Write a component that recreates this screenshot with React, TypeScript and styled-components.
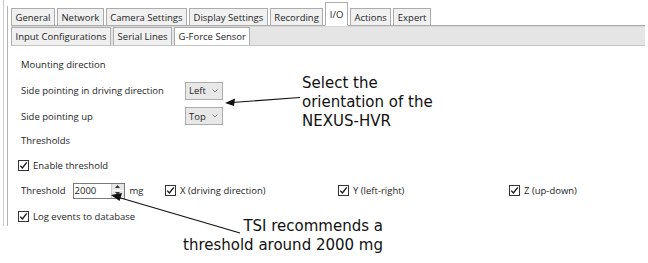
import * as React from "react";
import styled, { createGlobalStyle } from "styled-components";

const GlobalStyle = createGlobalStyle`
  html, body { margin: 0; padding: 0; background: #ffffff; }
  body { width: 648px; height: 263px; overflow: hidden; }
`;

const UI_FONT = `"Open Sans", "Noto Sans", sans-serif`;
const NOTE_FONT = `"DejaVu Sans", Verdana, sans-serif`;

const Page = styled.div`
  position: relative;
  width: 648px;
  height: 263px;
  background: #ffffff;
  font-family: ${UI_FONT};
  font-size: 9.5px;
  color: #1e1e1e;
`;

const OuterFrame = styled.div`
  margin-left: 3px;
  padding-top: 6px;
  width: 642px;
  height: 226px;
  border-left: 1px solid #c8c8c8;
  box-sizing: border-box;
`;

const InnerFrame = styled.div`
  margin-left: 3px;
  height: 100%;
  border-left: 1px solid #b4b4b4;
  padding-left: 3px;
`;

const TabRow = styled.div`
  display: flex;
  align-items: flex-end;
  height: 19px;
  border-bottom: 1px solid #acacac;
`;

const Tab = styled.div<{ $active?: boolean }>`
  height: ${(p) => (p.$active ? 22 : 16)}px;
  margin-bottom: ${(p) => (p.$active ? -1 : 0)}px;
  padding: 0 3.5px;
  margin-right: 2px;
  display: flex;
  align-items: center;
  border: 1px solid #acacac;
  border-bottom: ${(p) => (p.$active ? "1px solid #ffffff" : "none")};
  background: ${(p) => (p.$active ? "#ffffff" : "#f0f0f0")};
  white-space: nowrap;
  z-index: ${(p) => (p.$active ? 1 : 0)};
`;

const SubPanel = styled.div``;

const SubTabRow = styled.div`
  display: flex;
  align-items: stretch;
  height: 18px;
  background: #e5e5e5;
  border-top: 1px solid #d8d8d8;
  border-bottom: 1px solid #c4c4c4;
`;

const SubTab = styled.div<{ $active?: boolean }>`
  padding: 0 3.5px;
  margin-right: 2px;
  display: flex;
  align-items: center;
  border: 1px solid #acacac;
  border-bottom: none;
  background: ${(p) => (p.$active ? "#ffffff" : "#f0f0f0")};
  white-space: nowrap;
`;

const Content = styled.div`
  padding: 5px 0 0 10px;
  display: flex;
  flex-direction: column;
`;

const Row = styled.div<{ $h: number }>`
  height: ${(p) => p.$h}px;
  display: flex;
  align-items: center;
`;

const Label = styled.span<{ $w?: number }>`
  width: ${(p) => (p.$w ? `${p.$w}px` : "auto")};
  white-space: nowrap;
`;

const Combo = styled.div`
  width: 38px;
  height: 18px;
  box-sizing: border-box;
  border: 1px solid #acacac;
  background: #e8e8e8;
  display: flex;
  align-items: center;
  justify-content: space-between;
  padding: 0 4px 0 3px;
`;

const Chevron = styled.svg`
  width: 6px;
  height: 4px;
`;

const CheckRow = styled.label`
  display: flex;
  align-items: center;
  gap: 4px;
  margin-left: -3px;
  white-space: nowrap;
`;

const Box = styled.span`
  width: 11px;
  height: 11px;
  box-sizing: border-box;
  border: 1px solid #333333;
  background: #ffffff;
  display: flex;
  align-items: center;
  justify-content: center;
`;

const ThresholdGrid = styled.div`
  display: grid;
  grid-template-columns: 147px 173px 171px auto;
  align-items: center;
  width: 100%;
`;

const ThresholdCell = styled.div`
  display: flex;
  align-items: center;
`;

const Spin = styled.div`
  margin-left: 7px;
  width: 52px;
  height: 16px;
  box-sizing: border-box;
  border: 1px solid #7a7a7a;
  display: flex;
  align-items: center;
  background: #ffffff;
`;

const SpinValue = styled.span`
  flex: 1;
  padding-left: 1px;
`;

const SpinButtons = styled.div`
  width: 12px;
  height: 100%;
  display: flex;
  flex-direction: column;
  border-left: 1px solid #d0d0d0;
`;

const SpinButton = styled.div`
  flex: 1;
  background: #e6e6e6;
  display: flex;
  align-items: center;
  justify-content: center;
  border-bottom: 1px solid #ffffff;
`;

const Unit = styled.span`
  margin-left: 5px;
`;

const Note = styled.div<{ $align: "left" | "right" }>`
  position: absolute;
  font-family: ${NOTE_FONT};
  font-size: 15px;
  line-height: 19px;
  color: #111111;
  text-align: ${(p) => p.$align};
  white-space: nowrap;
`;

const NoteTop = styled(Note)`
  left: 302px;
  top: 74px;
`;

const NoteBottom = styled(Note)`
  right: 265px;
  top: 217px;
`;

const Arrows = styled.svg`
  position: absolute;
  left: 0;
  top: 0;
  pointer-events: none;
`;

function Check() {
  return (
    <Box>
      <svg width="9" height="9" viewBox="0 0 9 9">
        <path d="M1.2 4.6 L3.4 7 L7.8 1.4" fill="none" stroke="#1a1a1a" strokeWidth="1.4" />
      </svg>
    </Box>
  );
}

function Checkbox({ label }: { label: string }) {
  return (
    <CheckRow>
      <Check />
      <span>{label}</span>
    </CheckRow>
  );
}

function Select({ value }: { value: string }) {
  return (
    <Combo>
      <span>{value}</span>
      <Chevron viewBox="0 0 6 4">
        <path d="M0.5 0.5 L3 3 L5.5 0.5" fill="none" stroke="#777" strokeWidth="0.9" />
      </Chevron>
    </Combo>
  );
}

const mainTabs = ["General", "Network", "Camera Settings", "Display Settings", "Recording", "I/O", "Actions", "Expert"];
const subTabs = ["Input Configurations", "Serial Lines", "G-Force Sensor"];

export default function App() {
  return (
    <Page>
      <GlobalStyle />
      <OuterFrame>
        <InnerFrame>
          <TabRow>
            {mainTabs.map((t) => (
              <Tab key={t} $active={t === "I/O"}>
                {t}
              </Tab>
            ))}
          </TabRow>
          <SubPanel>
            <SubTabRow>
              {subTabs.map((t) => (
                <SubTab key={t} $active={t === "G-Force Sensor"}>
                  {t}
                </SubTab>
              ))}
            </SubTabRow>
            <Content>
              <Row $h={26}>
                <Label>Mounting direction</Label>
              </Row>
              <Row $h={27}>
                <Label $w={164}>Side pointing in driving direction</Label>
                <Select value="Left" />
              </Row>
              <Row $h={24}>
                <Label $w={164}>Side pointing up</Label>
                <Select value="Top" />
              </Row>
              <Row $h={25}>
                <Label>Thresholds</Label>
              </Row>
              <Row $h={25}>
                <Checkbox label="Enable threshold" />
              </Row>
              <Row $h={25}>
                <ThresholdGrid>
                  <ThresholdCell>
                    <Label>Threshold</Label>
                    <Spin>
                      <SpinValue>2000</SpinValue>
                      <SpinButtons>
                        <SpinButton>
                          <svg width="5" height="3" viewBox="0 0 5 3">
                            <path d="M0 3 L2.5 0 L5 3 Z" fill="#333" />
                          </svg>
                        </SpinButton>
                        <SpinButton>
                          <svg width="5" height="3" viewBox="0 0 5 3">
                            <path d="M0 0 L2.5 3 L5 0 Z" fill="#333" />
                          </svg>
                        </SpinButton>
                      </SpinButtons>
                    </Spin>
                    <Unit>mg</Unit>
                  </ThresholdCell>
                  <Checkbox label="X (driving direction)" />
                  <Checkbox label="Y (left-right)" />
                  <Checkbox label="Z (up-down)" />
                </ThresholdGrid>
              </Row>
              <Row $h={26}>
                <Checkbox label="Log events to database" />
              </Row>
            </Content>
          </SubPanel>
        </InnerFrame>
      </OuterFrame>

      <NoteTop $align="left">
        Select the
        <br />
        orientation of the
        <br />
        NEXUS-HVR
      </NoteTop>
      <NoteBottom $align="right">
        TSI recommends a
        <br />
        threshold around 2000 mg
      </NoteBottom>

      <Arrows width="648" height="263" viewBox="0 0 648 263">
        <line x1="300" y1="97.5" x2="232" y2="102.5" stroke="#111" strokeWidth="1.2" />
        <path d="M225 103 L235 98.5 L234 106 Z" fill="#111" />
        <line x1="240" y1="233" x2="119" y2="197.5" stroke="#111" strokeWidth="1.2" />
        <path d="M111 195 L122 193 L119.5 201 Z" fill="#111" />
      </Arrows>
    </Page>
  );
}
